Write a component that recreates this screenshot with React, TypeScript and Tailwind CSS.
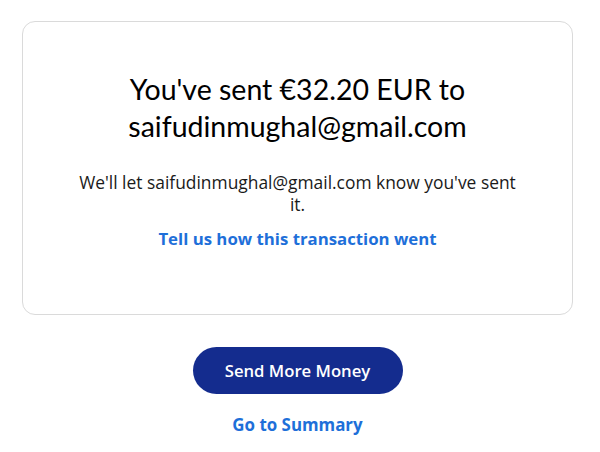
export default function App() {
  return (
    <div
      className="min-h-[452px] bg-white px-[22px] pt-[21px] text-[#000000]"
      style={{ fontFamily: "Lato, 'Open Sans', sans-serif" }}
    >
      {/* Confirmation card */}
      <div className="flex h-[294px] w-[551px] flex-col items-center rounded-[13px] border border-[#dadada] px-[40px] pt-[49px] text-center">
        <h1 className="text-[28.5px] leading-[37px] font-normal text-[#000]">
          You've sent €32.20 EUR to
          <br />
          saifudinmughal@gmail.com
        </h1>
        <p className="mt-[26px] w-[448px] font-['Open_Sans'] text-[17.4px] leading-[22px] text-[#1a1a1a]">
          We'll let saifudinmughal@gmail.com know you've sent it.
        </p>
        <a href="#" className="mt-[12px] font-['Open_Sans'] text-[16.8px] leading-[23px] font-bold text-[#1e6fd9]">
          Tell us how this transaction went
        </a>
      </div>

      {/* Actions */}
      <div className="flex w-[551px] flex-col items-center pt-[32px]">
        <button className="h-[47px] w-[210px] rounded-full bg-[#142c8e] font-['Open_Sans'] text-[16.7px] font-semibold text-white">
          Send More Money
        </button>
        <a href="#" className="mt-[18px] font-['Open_Sans'] text-[16.9px] font-bold text-[#1e6fd9]">
          Go to Summary
        </a>
      </div>
    </div>
  );
}
